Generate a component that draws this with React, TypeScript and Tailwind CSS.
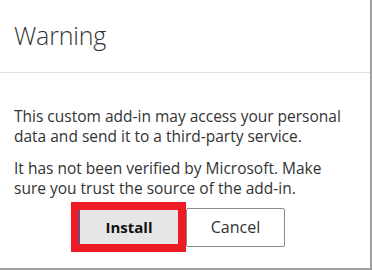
import React from 'react';

export default function App() {
  return (
    <div className="h-[270px] w-[372px] overflow-hidden bg-white">
      <div
        className="flex h-full flex-col border-r-2 border-b-2 border-[#a0a0a0] text-[#333]"
        style={{ fontFamily: '"Open Sans", "Noto Sans", sans-serif' }}
      >
        <div className="flex h-[73px] items-center border-b border-[#e1e1e1] pl-[14px]">
          <h1 className="text-[25px] font-light tracking-[-0.2px] text-[#333]">Warning</h1>
        </div>
        <div className="px-[14px] pt-[33px] text-[15.5px] leading-[20px]">
          <p>This custom add-in may access your personal data and send it to a third-party service.</p>
          <p className="mt-[12px]">It has not been verified by Microsoft. Make sure you trust the source of the add-in.</p>
        </div>
        <div className="flex items-center pl-[71px] pt-[4px]">
          <div className="border-8 border-[#ed1c24]">
            <button className="h-[34px] w-[99px] border-l border-[#0078d4] bg-[#e6e6e6] text-[15px] font-bold text-[#111]">
              Install
            </button>
          </div>
          <button className="h-[39px] w-[99px] rounded-[2px] border border-[#8a8a8a] bg-white text-[16px] text-[#333]">
            Cancel
          </button>
        </div>
      </div>
    </div>
  );
}
